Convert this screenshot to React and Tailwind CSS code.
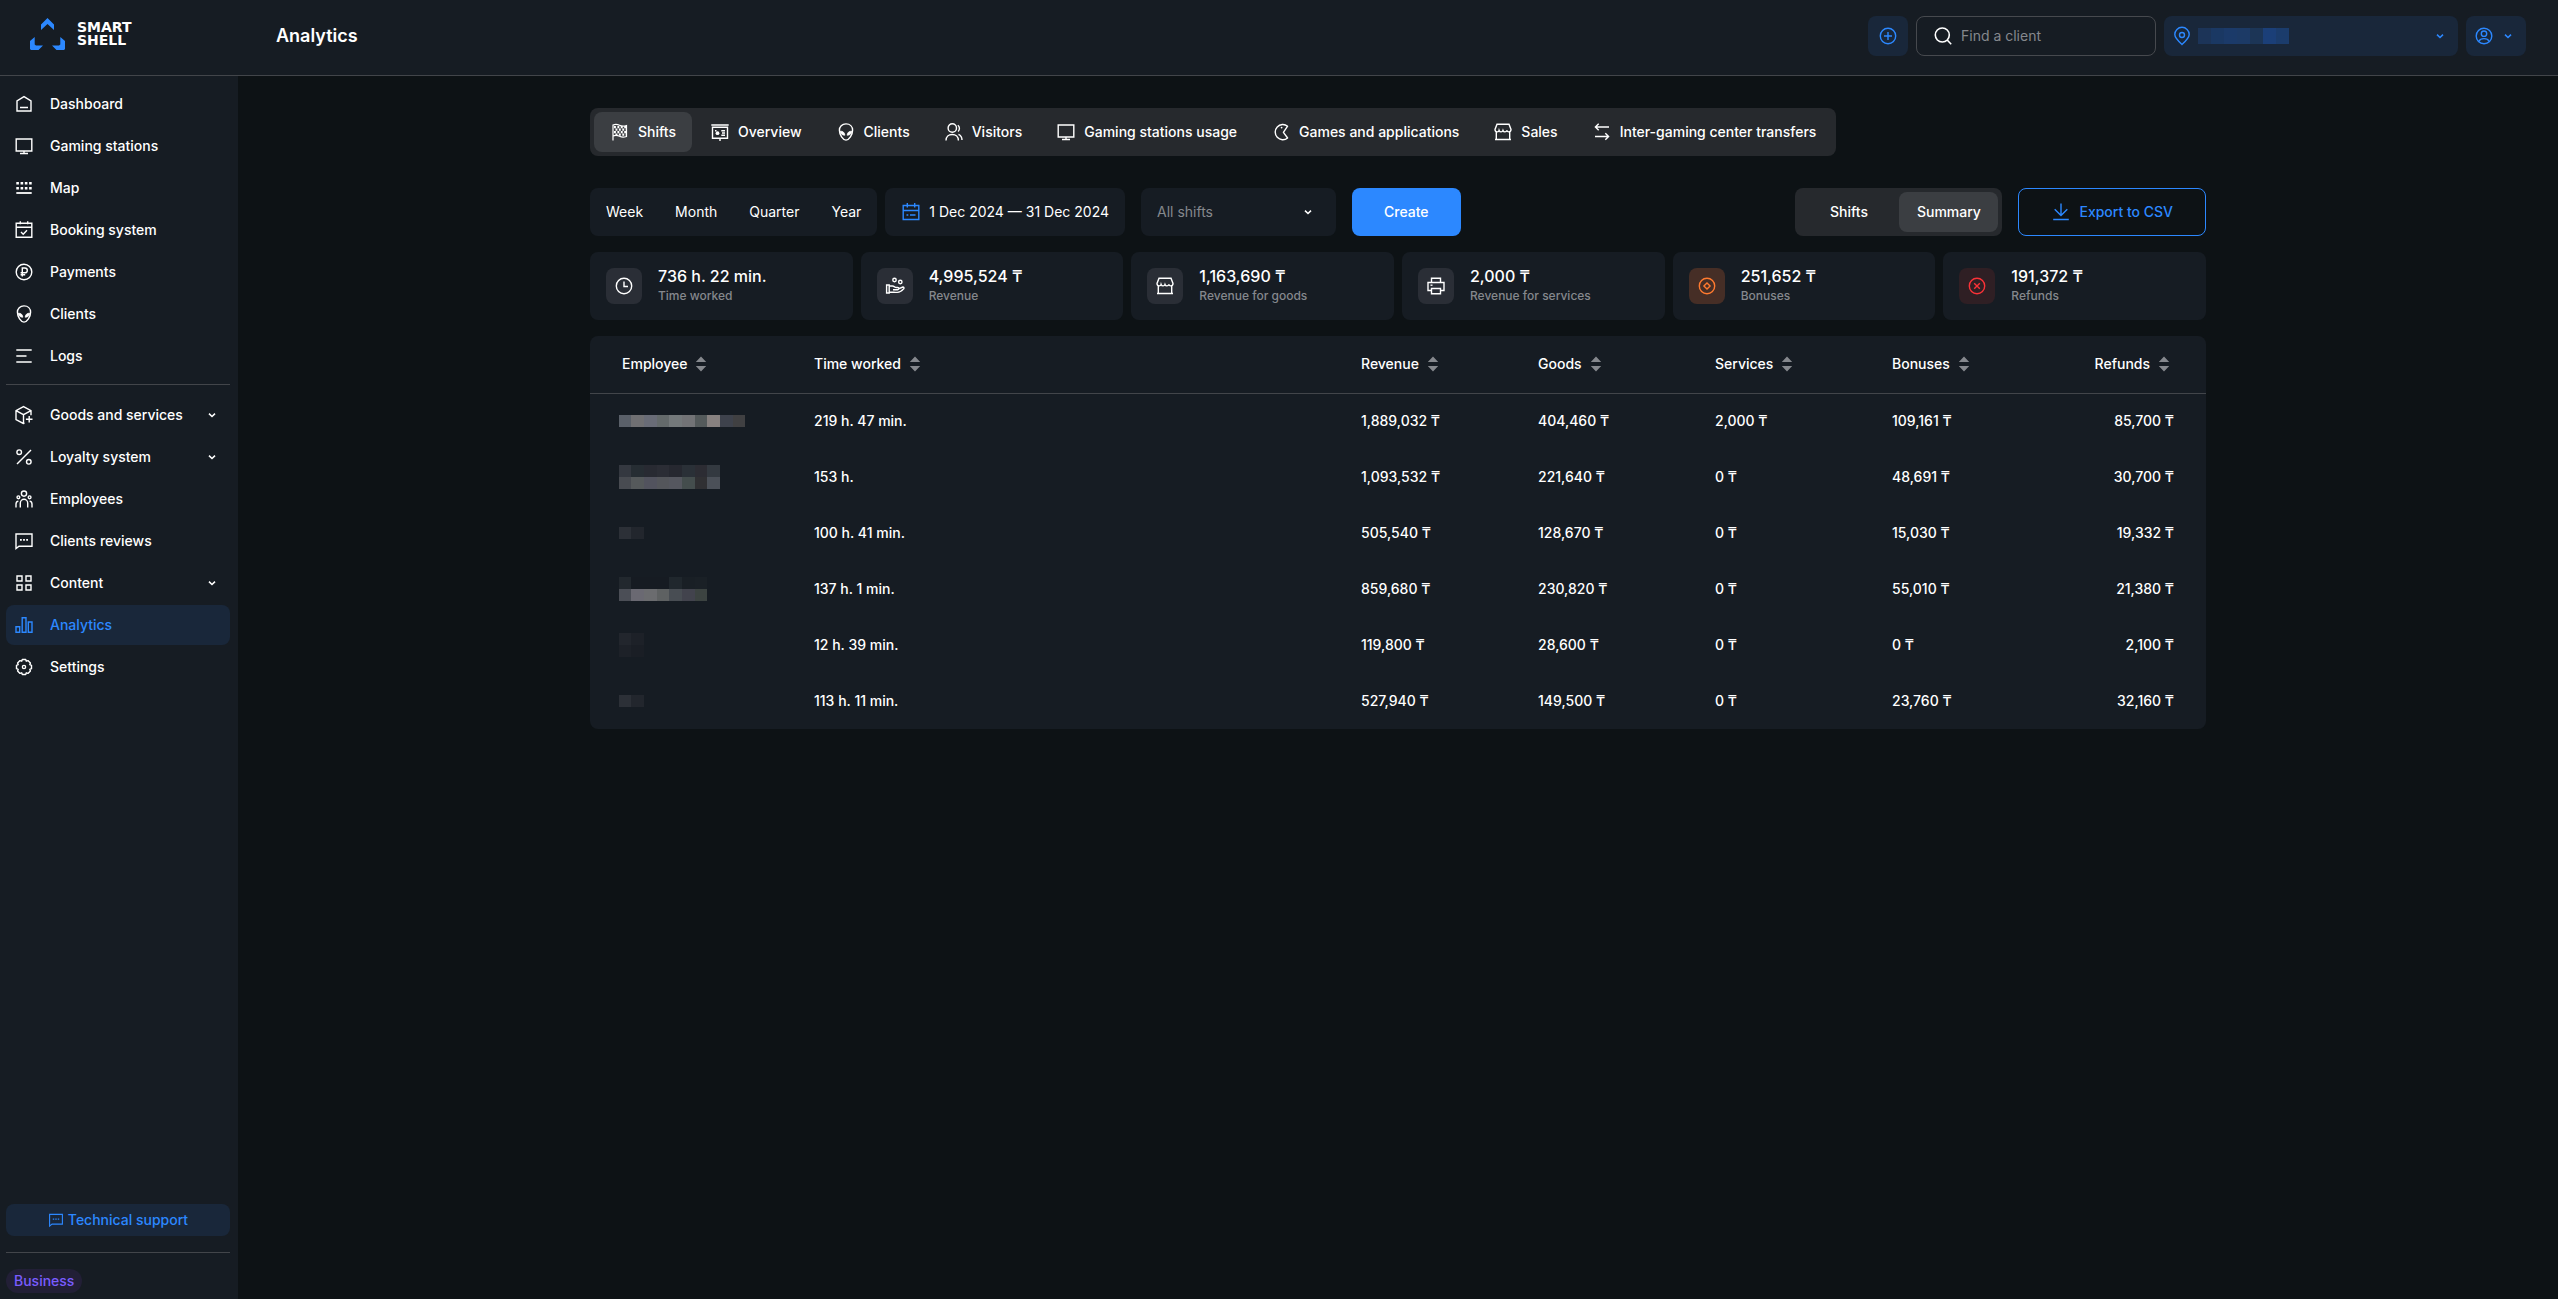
import React, { useState } from "react";

function Icon({ children, className = "size-5" }) {
  return (
    <svg
      viewBox="0 0 20 20"
      fill="none"
      stroke="currentColor"
      strokeWidth="1.4"
      className={`${className} shrink-0`}
      aria-hidden="true"
    >
      {children}
    </svg>
  );
}

const HomeIcon = () => (
  <Icon>
    <path d="M3 17V7l7-4.4L17 7v10H3ZM6 13.5h8" />
  </Icon>
);

const MonitorIcon = () => (
  <Icon>
    <path d="M2.2 3h15.6v12H2.2V3ZM10 15v2.5M6 17.5h8" />
  </Icon>
);

const MapIcon = () => (
  <Icon>
    <path d="M2.3 5.3h15.4M2.3 10.2h15.4" strokeWidth="2.4" strokeDasharray="2.6 1.67" />
    <path d="M2.3 15h15.4" strokeWidth="1.8" />
  </Icon>
);

const BookingIcon = () => (
  <Icon>
    <path d="M2.2 3.3h15.6v14H2.2v-14ZM2.2 7.3h15.6M6.3 1.2v3M13.7 1.2v3M7 12l2.2 2.2 3.8-4" />
  </Icon>
);

const PaymentsIcon = () => (
  <Icon>
    <circle cx="10" cy="10" r="7.8" />
    <path d="M8.3 14.5V6h2.6a2.4 2.4 0 0 1 0 4.8H6.6M6.6 12.8h4.6" />
  </Icon>
);

const AlienIcon = () => (
  <Icon>
    <path d="M10 1.9c4 0 6.6 2.7 6.6 6.4 0 4.3-3.6 9.8-6.6 9.8S3.4 12.6 3.4 8.3C3.4 4.6 6 1.9 10 1.9Z" />
    <path
      d="M4.2 9.2c2.6-.2 4.6 1.4 4.6 4C6.4 13.2 4.6 12 4.2 9.2ZM15.8 9.2c-2.6-.2-4.6 1.4-4.6 4 2.4 0 4.2-1.2 4.6-4Z"
      fill="currentColor"
      strokeWidth="0.8"
    />
  </Icon>
);

const LogsIcon = () => (
  <Icon>
    <path d="M2.3 4h15.4M2.3 10h10.2M2.3 16h15.4" strokeWidth="1.5" />
  </Icon>
);

const GoodsIcon = () => (
  <Icon>
    <path d="M10.5 18.2 9.3 18.4 2 14.5V5.7l7.5-4.1L17 5.7v4.6M2 5.7l7.5 4 7.500-4M9.500 9.700v8.700M15.200 11v6.600M11.900 14.300h6.600" />
  </Icon>
);

const PercentIcon = () => (
  <Icon>
    <circle cx="5.2" cy="5.2" r="2.3" />
    <circle cx="14.8" cy="14.8" r="2.3" />
    <path d="M17 3 3 17" />
  </Icon>
);

const EmployeesIcon = () => (
  <Icon>
    <circle cx="10" cy="4.6" r="2.6" />
    <circle cx="4.4" cy="8.3" r="1.4" />
    <circle cx="15.6" cy="8.3" r="1.4" />
    <path d="M6.3 18.500V14a3.700 3.700 0 0 1 7.400 0v4.500M2 18.500V15c0-1.700.7-2.700 2.400-2.900M18 18.500V15c0-1.700-.7-2.700-2.400-2.900" />
  </Icon>
);

const ReviewIcon = ({ className }) => (
  <Icon className={className}>
    <path d="M2 17.6V3h16v12.2H5L2 17.6Z" />
    <path d="M6 8.9h8" strokeWidth="1.8" strokeDasharray="1.8 1.3" />
  </Icon>
);

const GridIcon = () => (
  <Icon>
    <path d="M3 3h5v5H3V3ZM12 3h5v5h-5V3ZM3 12h5v5H3v-5ZM12 12h5v5h-5v-5Z" />
  </Icon>
);

const BarsIcon = () => (
  <Icon>
    <path d="M2 11.8h3.700v5.400H2v-5.400ZM8.200 2.800H12v14.400H8.200V2.800ZM14.300 7H18v10.200h-3.700V7Z" />
  </Icon>
);

const GearIcon = () => (
  <Icon>
    <circle cx="10" cy="10" r="1.6" />
    <path
      d="M8.3 2.500h3.400l.6 1.700 1.700-.6 2.400 2.400-.6 1.700 1.700.6v3.400l-1.700.6.6 1.700-2.400 2.400-1.700-.6-.6 1.700H8.300l-.6-1.700-1.700.6L3.600 14l.6-1.700-1.700-.6V8.300l1.700-.6L3.600 6 6 3.600l1.700.6.6-1.700Z"
      strokeLinejoin="round"
    />
  </Icon>
);

const FlagIcon = () => (
  <Icon>
    <path
      d="M3 18.5V3c2.300-1 4.500-.7 6.500.3s4.500 1.100 7 .2v11c-2.500.9-5 .8-7-.2s-4.200-1.200-6.500-.3"
      strokeWidth="1.2"
    />
    <path
      d="M4 5.200h12M5.500 7.700h11M4 10.200h12M5.500 12.700h11"
      strokeWidth="2.2"
      strokeDasharray="1.9 1.5"
    />
  </Icon>
);

const OverviewIcon = () => (
  <Icon>
    <path d="M1.300 3h17.400M2.500 5.200v11h15v-11h-15ZM10 16.200V19M11.300 8.700H15M12 11H15M11.300 13.200H15" />
    <circle cx="7.5" cy="11.2" r="1.9" fill="currentColor" stroke="none" />
    <path d="M5 8.700h1.500" />
  </Icon>
);

const VisitorsIcon = () => (
  <Icon>
    <circle cx="8.3" cy="6" r="4.2" />
    <path d="M2 18.6c0-3.900 2.700-6.100 6.200-6.100s6.200 2.200 6.200 6.100M13.800 3.200a4 4 0 0 1 .3 6.200M14.500 12.300c2 .9 3.500 3 3.500 5.700" />
  </Icon>
);

const GamesIcon = () => (
  <Icon>
    <path d="M16.600 4.200A7.600 7.600 0 1 0 16.600 16l-4.200-5.700 4.200-6.100Z" strokeLinejoin="round" />
    <circle cx="10.6" cy="5.6" r="0.9" fill="currentColor" stroke="none" />
  </Icon>
);

const ShopIcon = () => (
  <Icon>
    <path d="M4 2.300h12l2 5.200c0 1.500-1 2.400-2.200 2.400-1 0-1.700-.5-1.900-1.500-.3 1-1 1.500-1.950 1.500-.95 0-1.600-.5-1.950-1.500-.3 1-1 1.500-1.950 1.500-.95 0-1.600-.5-1.950-1.500-.2 1-.9 1.500-1.900 1.500C3 9.900 2 9 2 7.500l2-5.200ZM3.300 9.600v7.900h13.400V9.600M2 17.500h16" />
  </Icon>
);

const TransferIcon = () => (
  <Icon>
    <path d="M17 5H3.400M6.700 1.700 3.400 5l3.300 3.300M3 14.500h13.600M13.300 11.200l3.300 3.300-3.300 3.300" />
  </Icon>
);

const CalendarIcon = () => (
  <Icon>
    <path d="M2.200 3.500h15.600v14H2.200v-14ZM2.200 8.500h15.600M6.300 1v4.500M13.700 1v4.500M5.500 13h1.800M9 13h5.500" />
  </Icon>
);

const ClockIcon = () => (
  <Icon>
    <circle cx="10" cy="10" r="7.7" />
    <path d="M10 5.500v5h4" />
  </Icon>
);

const HandCoinsIcon = () => (
  <Icon>
    <circle cx="9.5" cy="4" r="1.7" />
    <circle cx="15.3" cy="6" r="1.7" />
    <path d="M1.600 9h2.600v8H1.600V9ZM4.200 10h3.300c1.700 0 2.300 1.500 3.700 1.500h1.500c1.700 0 1.700 2.200 0 2.200H8M13.500 12.800l4.300-1.800c1.300 0 1.500 1.200.8 1.900-1.800 2-4 3.500-6.300 3.500-3 0-4.500-.4-8.100-.4" />
  </Icon>
);

const PrinterIcon = () => (
  <Icon>
    <path d="M5.500 6.500V2.300h9v4.200M5.500 14.500H2v-8h16v8h-3.500M5.500 12.500h9v5.200h-9v-5.200Z" />
    <path d="M4.500 9.200h2" />
  </Icon>
);

const BonusIcon = () => (
  <Icon>
    <circle cx="10" cy="10" r="7.7" />
    <path d="m10 6.900 3.100 3.100-3.100 3.100L6.900 10 10 6.900Z" />
  </Icon>
);

const RefundIcon = () => (
  <Icon>
    <circle cx="10" cy="10" r="7.7" />
    <path d="m7.200 7.200 5.600 5.600M12.800 7.200l-5.600 5.600" />
  </Icon>
);

const PlusCircleIcon = () => (
  <Icon>
    <circle cx="10" cy="10" r="7.7" />
    <path d="M10 6v8M6 10h8" />
  </Icon>
);

const SearchIcon = () => (
  <Icon>
    <circle cx="9.3" cy="9" r="7" strokeWidth="1.6" />
    <path d="m14.200 14 4 4.200" strokeWidth="1.6" />
  </Icon>
);

const PinIcon = () => (
  <Icon>
    <path d="M10 18.500c-4-3.700-7.200-6.600-7.200-10a7.200 7.200 0 0 1 14.400 0c0 3.400-3.200 6.300-7.200 10Z" />
    <circle cx="10" cy="9" r="2.5" />
  </Icon>
);

const AccountIcon = () => (
  <Icon>
    <circle cx="10" cy="10" r="7.8" />
    <circle cx="10" cy="7.7" r="2.7" />
    <path d="M4.800 15.500c1-2.200 2.900-2.900 5.200-2.900s4.200.7 5.200 2.900" />
  </Icon>
);

const DownloadIcon = () => (
  <Icon>
    <path d="M10 1.500v11.800M3.700 7.200l6.300 6.200 6.300-6.200M2.200 17.500h15.600" />
  </Icon>
);

const ChevronIcon = ({ className = "size-2" }) => (
  <svg viewBox="0 0 8 8" className={`${className} shrink-0`} aria-hidden="true">
    <path d="M1 2.700 4 5.500l3-2.800" fill="none" stroke="currentColor" strokeWidth="1.6" />
  </svg>
);

const SortIcon = () => (
  <svg viewBox="0 0 20 20" className="size-5 shrink-0" fill="#85888d" aria-hidden="true">
    <path d="M10 2.500 15.200 8H4.800L10 2.500ZM10 17.500 15.200 12H4.800L10 17.500Z" />
  </svg>
);

const mainLinks = [
  { label: "Dashboard", icon: HomeIcon },
  { label: "Gaming stations", icon: MonitorIcon },
  { label: "Map", icon: MapIcon },
  { label: "Booking system", icon: BookingIcon },
  { label: "Payments", icon: PaymentsIcon },
  { label: "Clients", icon: AlienIcon },
  { label: "Logs", icon: LogsIcon },
];

const manageLinks = [
  { label: "Goods and services", icon: GoodsIcon, nested: true },
  { label: "Loyalty system", icon: PercentIcon, nested: true },
  { label: "Employees", icon: EmployeesIcon },
  { label: "Clients reviews", icon: ReviewIcon },
  { label: "Content", icon: GridIcon, nested: true },
  { label: "Analytics", icon: BarsIcon, active: true },
  { label: "Settings", icon: GearIcon },
];

const tabs = [
  { label: "Shifts", icon: FlagIcon },
  { label: "Overview", icon: OverviewIcon },
  { label: "Clients", icon: AlienIcon },
  { label: "Visitors", icon: VisitorsIcon },
  { label: "Gaming stations usage", icon: MonitorIcon },
  { label: "Games and applications", icon: GamesIcon },
  { label: "Sales", icon: ShopIcon },
  { label: "Inter-gaming center transfers", icon: TransferIcon },
];

const stats = [
  { value: "736 h. 22 min.", label: "Time worked", icon: ClockIcon, tone: "bg-[#2a2e36] text-white" },
  { value: "4,995,524 ₸", label: "Revenue", icon: HandCoinsIcon, tone: "bg-[#2a2e36] text-white" },
  { value: "1,163,690 ₸", label: "Revenue for goods", icon: ShopIcon, tone: "bg-[#2a2e36] text-white" },
  { value: "2,000 ₸", label: "Revenue for services", icon: PrinterIcon, tone: "bg-[#2a2e36] text-white" },
  { value: "251,652 ₸", label: "Bonuses", icon: BonusIcon, tone: "bg-[#462e26] text-[#ff7a2f]" },
  { value: "191,372 ₸", label: "Refunds", icon: RefundIcon, tone: "bg-[#2f1f24] text-[#fb3237]" },
];

const columns = ["Employee", "Time worked", "Revenue", "Goods", "Services", "Bonuses", "Refunds"];

// Employee names are hidden, each one is a list of pixel rows
const rows = [
  {
    name: [["#5a6069", "#707073", "#696c77", "#646a6b", "#74797b", "#727376", "#545a5b", "#878180", "#3e424c", "#404042"]],
    cells: ["219 h. 47 min.", "1,889,032 ₸", "404,460 ₸", "2,000 ₸", "109,161 ₸", "85,700 ₸"],
  },
  {
    name: [
      ["#343840", "#262d33", "#282a32", "#2b2d35", "#262830", "#2a3037", "#2c2c33", "#333940"],
      ["#484b51", "#55595b", "#52535e", "#54565b", "#55575f", "#444d4d", "#303033", "#4b5058"],
    ],
    cells: ["153 h.", "1,093,532 ₸", "221,640 ₸", "0 ₸", "48,691 ₸", "30,700 ₸"],
  },
  {
    name: [["#2c3037", "#22262d"]],
    cells: ["100 h. 41 min.", "505,540 ₸", "128,670 ₸", "0 ₸", "15,030 ₸", "19,332 ₸"],
  },
  {
    name: [
      ["#22282e", "#161b22", "#161b22", "#161b22", "#20272d", "#191f25", "#1a2026"],
      ["#4b4e56", "#6a6972", "#6b6c6f", "#5e6162", "#484d53", "#42434d", "#3c4341"],
    ],
    cells: ["137 h. 1 min.", "859,680 ₸", "230,820 ₸", "0 ₸", "55,010 ₸", "21,380 ₸"],
  },
  {
    name: [
      ["#22262d", "#1d2128"],
      ["#1d2128", "#1a1e25"],
    ],
    cells: ["12 h. 39 min.", "119,800 ₸", "28,600 ₸", "0 ₸", "0 ₸", "2,100 ₸"],
  },
  {
    name: [["#2c3037", "#22262d"]],
    cells: ["113 h. 11 min.", "527,940 ₸", "149,500 ₸", "0 ₸", "23,760 ₸", "32,160 ₸"],
  },
];

const clubName = ["#1c3458", "#1a3863", "#1b3a69", "#1c3a66", "#1c3556", "#1b3f78", "#1b3c6c"];

function HiddenName({ lines }) {
  return (
    <div aria-label="Hidden name" role="img">
      {lines.map((line, row) => (
        <div key={row} className="flex h-3">
          {line.map((color, i) => (
            <span
              key={i}
              className={i % 3 === 0 ? "w-3" : "w-[13px]"}
              style={{ backgroundColor: color }}
            />
          ))}
        </div>
      ))}
    </div>
  );
}

function Header() {
  const [search, setSearch] = useState("");

  return (
    <header className="flex h-[76px] items-center border-b border-[#42454a] bg-[#161c23] pr-8 pb-[3px]">
      <a
        href="#"
        className="flex w-[276px] items-center gap-3 pb-1 pl-[30px]"
        aria-label="Smart Shell"
      >
        <svg viewBox="0 0 35 32" className="h-8 w-[35px]" fill="#2c88ff" aria-hidden="true">
          <path d="M17.500 0 24 6.500V12l-6.500-6-6.500 6V6.500L17.500 0Z" />
          <path d="M4.700 19v7.500l1.300 1h7L8.500 32H1l-1-1v-8l4.700-4Z" />
          <path d="M30.300 19v7.500l-1.300 1h-7l4.500 4.500H34l1-1v-8l-4.700-4Z" />
        </svg>
        <span className="flex flex-col font-['DejaVu_Sans',sans-serif] text-[14px] leading-[13px] font-bold text-white">
          <span>SMART</span>
          <span>SHELL</span>
        </span>
      </a>
      <h1 className="text-lg font-semibold">Analytics</h1>

      <div className="ml-auto flex items-center gap-2 text-[#2c88ff]">
        <button
          type="button"
          aria-label="Add"
          className="flex size-10 items-center justify-center rounded-lg bg-[#19273a]"
        >
          <PlusCircleIcon />
        </button>
        <label className="flex h-10 w-60 items-center gap-2 rounded-lg border border-[#46494e] px-4 text-white">
          <SearchIcon />
          <input
            type="text"
            placeholder="Find a client"
            aria-label="Find a client"
            value={search}
            onChange={(e) => setSearch(e.target.value)}
            className="w-full min-w-0 bg-transparent text-sm outline-none placeholder:text-[#85888d]"
          />
        </label>
        <button
          type="button"
          aria-label="Select club"
          aria-haspopup="listbox"
          className="flex h-10 w-[294px] items-center rounded-lg bg-[#19273a] pr-[14px] pl-2"
        >
          <PinIcon />
          <span className="ml-1.5 flex h-4">
            {clubName.map((color, i) => (
              <span key={i} className="w-[13px]" style={{ backgroundColor: color }} />
            ))}
          </span>
          <ChevronIcon className="ml-auto size-2" />
        </button>
        <button
          type="button"
          aria-label="Account"
          className="flex h-10 w-[60px] items-center justify-between rounded-lg bg-[#19273a] pr-[14px] pl-2"
        >
          <AccountIcon />
          <ChevronIcon />
        </button>
      </div>
    </header>
  );
}

function SidebarLinks({ links }) {
  return (
    <ul className="flex flex-col gap-0.5">
      {links.map(({ label, icon: LinkIcon, nested, active }) => (
        <li key={label}>
          <a
            href="#"
            aria-current={active ? "page" : undefined}
            className={`flex h-10 items-center gap-4 rounded-lg pr-[14px] pl-2 text-sm font-medium ${
              active ? "bg-[#19273a] text-[#2c88ff]" : "text-white"
            }`}
          >
            <LinkIcon />
            {label}
            {nested && <ChevronIcon className="ml-auto size-2" />}
          </a>
        </li>
      ))}
    </ul>
  );
}

function Sidebar() {
  return (
    <aside className="flex w-[238px] shrink-0 flex-col bg-[#161c23] pt-2 pr-2 pb-1.5 pl-1.5">
      <nav>
        <SidebarLinks links={mainLinks} />
        <hr className="mt-2 mb-2.5 border-[#42454a]" />
        <SidebarLinks links={manageLinks} />
      </nav>
      <div className="mt-auto">
        <a
          href="#"
          className="flex h-8 items-center justify-center gap-1 rounded-lg bg-[#19273a] text-sm font-medium text-[#2c88ff]"
        >
          <ReviewIcon className="size-4" />
          Technical support
        </a>
        <hr className="my-4 border-[#42454a]" />
        <span className="inline-flex h-6 items-center rounded-full bg-[#221f36] px-2 align-top text-sm font-medium text-[#7a5cff]">
          Business
        </span>
      </div>
    </aside>
  );
}

function Filters() {
  const [view, setView] = useState("Summary");

  return (
    <div className="flex h-12 items-stretch text-sm">
      <div className="flex rounded-lg bg-[#161c23]">
        {["Week", "Month", "Quarter", "Year"].map((period) => (
          <button key={period} type="button" className="px-4">
            {period}
          </button>
        ))}
      </div>
      <button
        type="button"
        className="ml-2 flex items-center gap-2 rounded-lg bg-[#161c23] px-4"
      >
        <span className="text-[#2c88ff]">
          <CalendarIcon />
        </span>
        1 Dec 2024 — 31 Dec 2024
      </button>
      <div className="relative ml-4 flex w-[195px]">
        <select
          aria-label="Shift filter"
          className="w-full appearance-none rounded-lg bg-[#161c23] px-4 text-[#85888d] outline-none"
        >
          <option>All shifts</option>
        </select>
        <ChevronIcon className="pointer-events-none absolute top-5 right-6 size-2" />
      </div>
      <button type="button" className="ml-4 rounded-lg bg-[#2c88ff] px-8 font-medium">
        Create
      </button>

      <div className="ml-auto flex w-[207px] gap-px rounded-lg bg-[#26292d] p-1">
        {["Shifts", "Summary"].map((name) => (
          <button
            key={name}
            type="button"
            onClick={() => setView(name)}
            className={`flex-1 rounded-lg font-medium ${view === name ? "bg-[#3b3e42]" : ""}`}
          >
            {name}
          </button>
        ))}
      </div>
      <button
        type="button"
        className="ml-4 flex items-center gap-2 rounded-lg border border-[#2c88ff] px-8 font-medium text-[#2c88ff]"
      >
        <DownloadIcon />
        Export to CSV
      </button>
    </div>
  );
}

function ShiftsTable() {
  return (
    <table className="mt-4 w-full table-fixed rounded-lg bg-[#161c23] text-left text-sm">
      <colgroup>
        <col className="w-[224px]" />
        <col />
        <col className="w-[177px]" />
        <col className="w-[177px]" />
        <col className="w-[177px]" />
        <col className="w-[177px]" />
        <col className="w-[137px]" />
      </colgroup>
      <thead>
        <tr className="h-[57px] border-b border-[#42454a]">
          {columns.map((name) => (
            <th key={name} className="p-0 font-medium first:pl-8 last:pr-8">
              <button
                type="button"
                className={`flex items-center gap-1 ${name === "Refunds" ? "ml-auto" : ""}`}
              >
                {name}
                <SortIcon />
              </button>
            </th>
          ))}
        </tr>
      </thead>
      <tbody>
        {rows.map((row) => (
          <tr key={row.cells[0]} className="h-14">
            <td className="pl-[29px]">
              <HiddenName lines={row.name} />
            </td>
            {row.cells.map((cell, i) => (
              <td key={i} className="font-medium last:pr-8 last:text-right">
                {cell}
              </td>
            ))}
          </tr>
        ))}
      </tbody>
    </table>
  );
}

function App() {
  const [activeTab, setActiveTab] = useState("Shifts");

  return (
    <div className="flex min-h-screen flex-col bg-[#0d1215] font-[Inter,sans-serif] text-white">
      <Header />
      <div className="flex flex-1">
        <Sidebar />
        <main className="flex-1 px-8 pt-8">
          <div className="mx-auto max-w-[1616px]">
            <div className="flex h-12 w-fit gap-0.5 rounded-lg bg-[#26292d] p-1">
              {tabs.map(({ label, icon: TabIcon }) => (
                <button
                  key={label}
                  type="button"
                  onClick={() => setActiveTab(label)}
                  className={`flex items-center gap-2 rounded-lg px-4 text-sm font-medium ${
                    activeTab === label ? "bg-[#3b3e42]" : ""
                  }`}
                >
                  <TabIcon />
                  {label}
                </button>
              ))}
            </div>

            <div className="mt-8">
              <Filters />
            </div>

            {/* Totals for the selected period */}
            <div className="mt-4 grid grid-cols-6 gap-2">
              {stats.map(({ value, label, icon: StatIcon, tone }) => (
                <div key={label} className="flex h-[68px] items-center gap-4 rounded-lg bg-[#161c23] px-4">
                  <div className={`flex size-9 items-center justify-center rounded-lg ${tone}`}>
                    <StatIcon />
                  </div>
                  <div>
                    <p className="text-base leading-5 font-medium">{value}</p>
                    <p className="text-xs leading-5 font-medium text-[#85888d]">{label}</p>
                  </div>
                </div>
              ))}
            </div>

            <ShiftsTable />
          </div>
        </main>
      </div>
    </div>
  );
}

export default App;
